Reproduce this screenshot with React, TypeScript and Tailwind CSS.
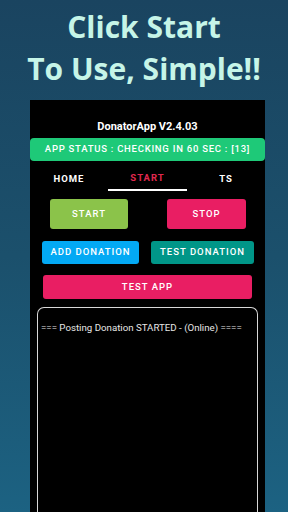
const App = () => {
  return (
    <div className="w-[288px] h-[512px] overflow-hidden flex flex-col bg-gradient-to-b from-[#1a4460] via-[#1b506c] to-[#1c6282] font-['Roboto',sans-serif]">
      <div className="h-[100px] flex flex-col items-center pt-[6px] font-['Open_Sans',sans-serif] font-bold text-[#c6f5e8] text-[30px] leading-[42px] tracking-[0px]">
        <p>Click Start</p>
        <p>To Use, Simple!!</p>
      </div>
      <div className="ml-[30px] w-[235px] flex-1 bg-black flex flex-col">
        <p className="text-white text-[11px] font-bold text-center mt-[20px] leading-[14px]">
          DonatorApp V2.4.03
        </p>
        <div className="mt-[4px] h-[23px] rounded-[4px] bg-[#1ec978] flex items-center justify-center text-white text-[9.5px] font-medium tracking-[0.75px]">
          APP STATUS : CHECKING IN 60 SEC : [13]
        </div>
        <div className="flex mt-[6px] text-[9.5px] font-bold tracking-[1px]">
          <div className="w-[78px] h-[24px] flex items-center justify-center text-white">HOME</div>
          <div className="w-[79px] h-[24px] flex items-center justify-center text-[#e0284f] border-b-2 border-white">
            START
          </div>
          <div className="w-[78px] h-[24px] flex items-center justify-center text-white">TS</div>
        </div>
        <div className="flex justify-between pl-[20px] pr-[19px] mt-[8px] text-white text-[9.5px] font-medium tracking-[1px]">
          <button className="w-[78px] h-[30px] rounded-[3px] bg-[#8bc34a]">START</button>
          <button className="w-[79px] h-[30px] rounded-[3px] bg-[#e91e63]">STOP</button>
        </div>
        <div className="flex justify-between pl-[12px] pr-[11px] mt-[12px] text-white text-[9.5px] font-medium tracking-[1px]">
          <button className="w-[97px] h-[23px] rounded-[3px] bg-[#03a9f4]">ADD DONATION</button>
          <button className="w-[103px] h-[23px] rounded-[3px] bg-[#009688]">TEST DONATION</button>
        </div>
        <button className="mx-[13px] mt-[11px] h-[24px] rounded-[3px] bg-[#e91e63] text-white text-[9.5px] font-medium tracking-[1px]">
          TEST APP
        </button>
        <div className="mx-[7px] mt-[8px] flex-1 border-[1.5px] border-[#d8d8d8] rounded-t-[7px] border-b-0 px-[3px] pt-[13px]">
          <p className="text-[#e6e6e6] text-[9.7px] leading-[14px] whitespace-nowrap">
            === Posting Donation STARTED - (Online) ====
          </p>
        </div>
      </div>
    </div>
  );
};

export default App;
